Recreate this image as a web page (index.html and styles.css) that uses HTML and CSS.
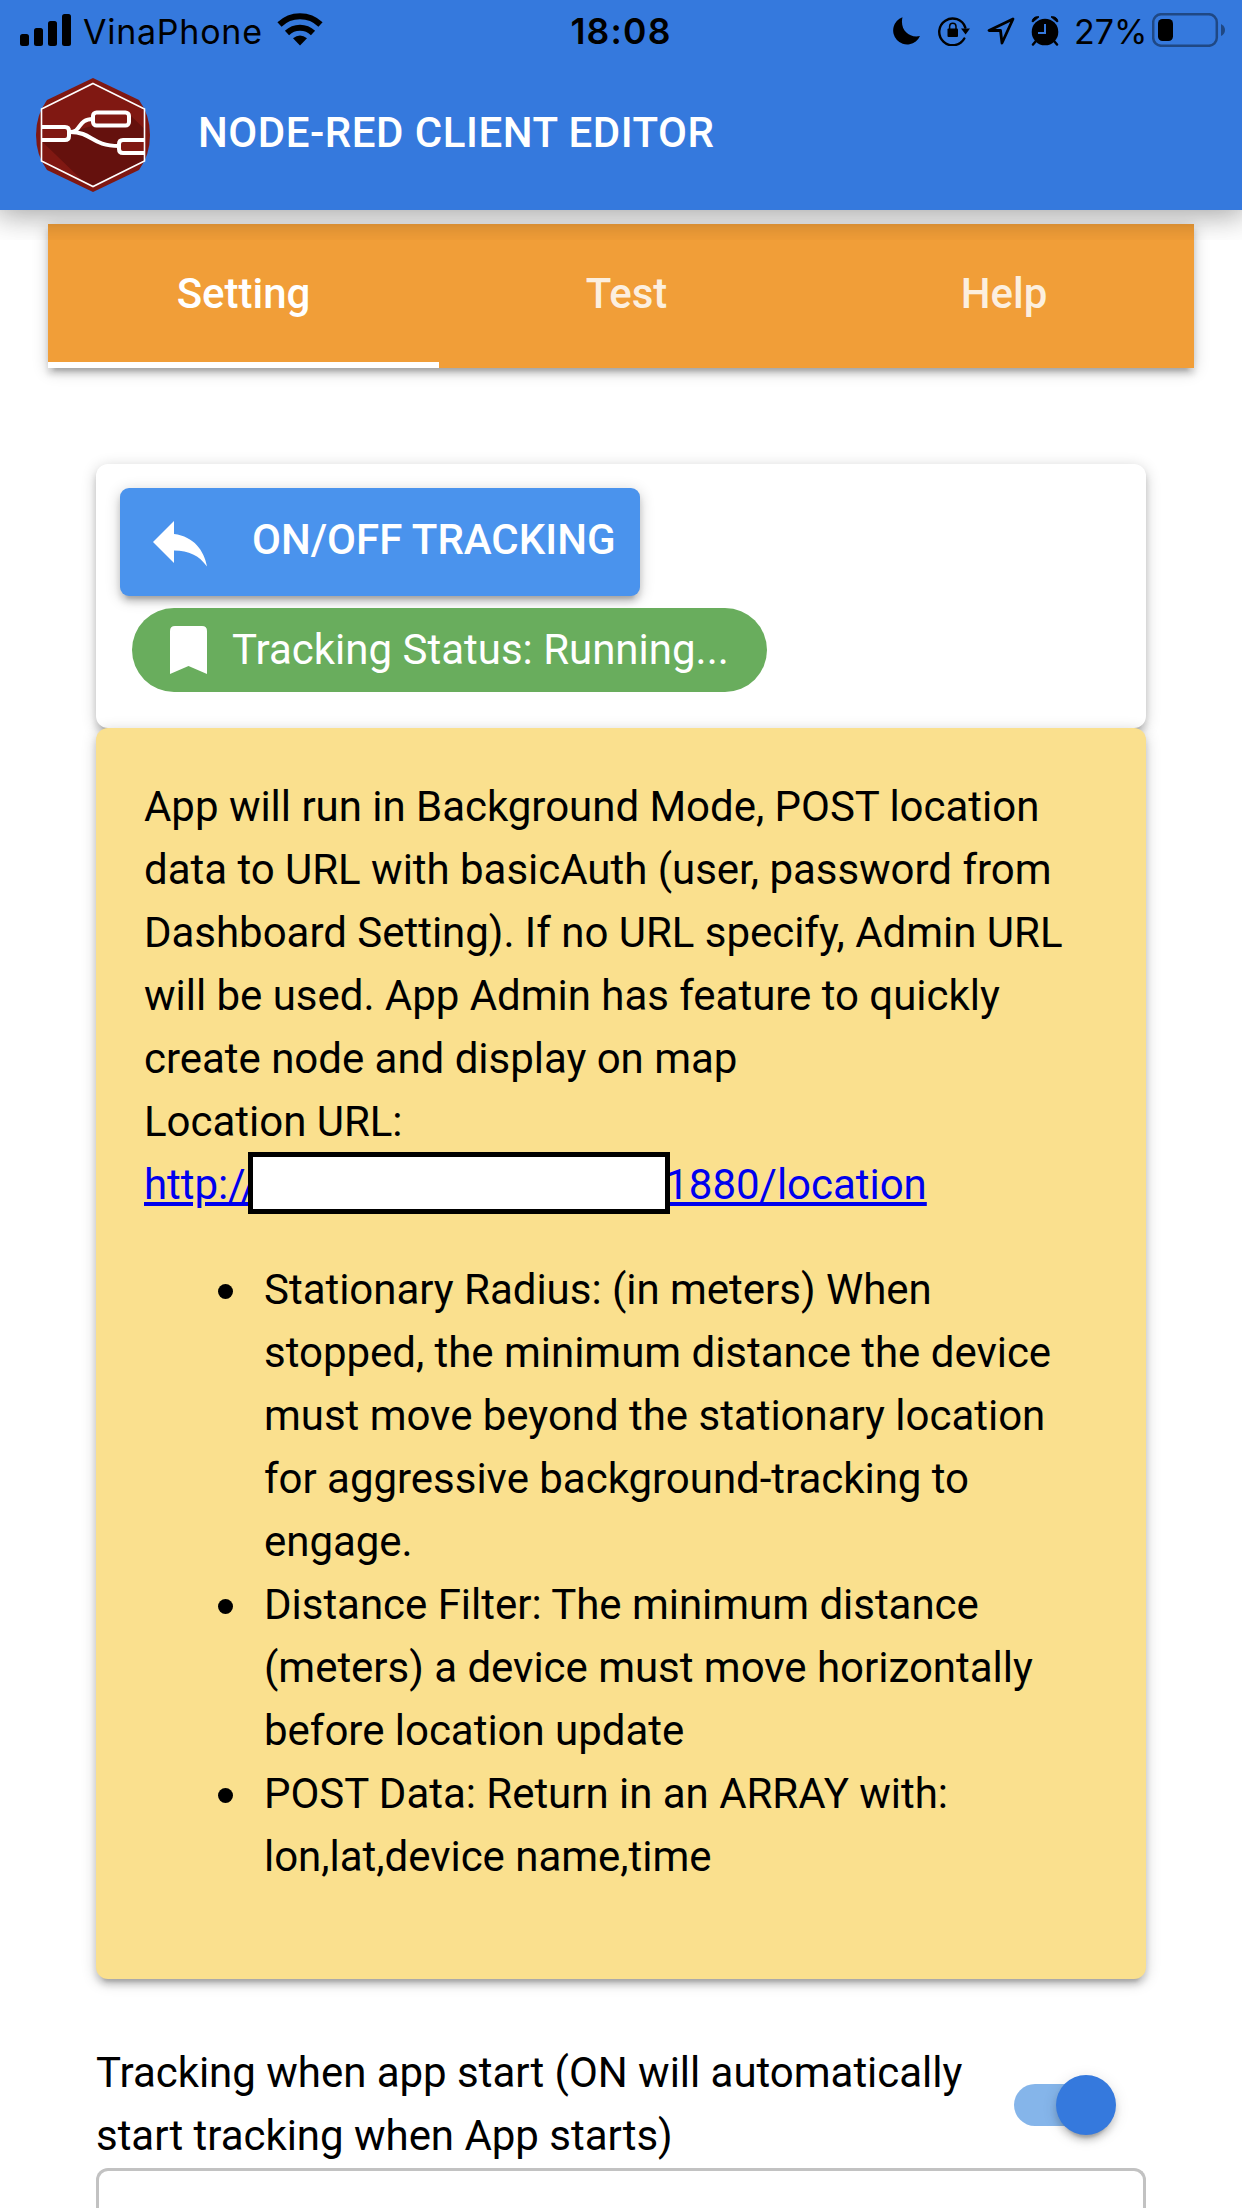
FILE: index.html
```html
<!DOCTYPE html>
<html lang="en">
<head>
<meta charset="utf-8">
<title>Node-RED Client Editor</title>
<link rel="stylesheet" href="styles.css">
</head>
<body>
<div class="header-layer">
  <header class="header">
    <div class="status">
      <div class="status-left">
        <svg class="signal" width="51" height="32" viewBox="0 0 51 32"><rect x="0" y="20" width="9" height="12" rx="2.5"/><rect x="14" y="14" width="9" height="18" rx="2.5"/><rect x="28" y="7" width="9" height="25" rx="2.5"/><rect x="42" y="0" width="9" height="32" rx="2.5"/></svg>
        <span class="carrier">VinaPhone</span>
        <svg class="wifi" width="46" height="34" viewBox="0 0 46 34"><g fill="none" stroke="#000" stroke-width="6"><path d="M2.500 12.500A29.500 29.500 0 0 1 43.500 12.500"/><path d="M10 21A18.700 18.700 0 0 1 36 21"/></g><path d="M23 33.500L16 26.300Q23 20.500 30 26.300Z"/></svg>
      </div>
      <span class="clock">18:08</span>
      <div class="status-right">
        <svg class="moon" width="28" height="28" viewBox="0 0 28 28"><path d="M10.500 0.200A14 14 0 1 0 28 19C17 21.500 7.500 12.500 10.500 0.200Z"/></svg>
        <svg class="lock" width="33" height="30" viewBox="0 0 33 30"><path d="M26.300 22.500A13.400 13.400 0 1 1 27.300 11.500" fill="none" stroke="#000" stroke-width="2.400" stroke-linecap="round"/><path d="M23 12.500H32L27.600 18.600Z"/><rect x="9.500" y="12.500" width="10.500" height="8.500" rx="1"/><path d="M11.600 13V10.500A3.200 3.200 0 0 1 18 10.500V13" fill="none" stroke="#000" stroke-width="1.500"/></svg>
        <svg class="arrow" width="28" height="28" viewBox="0 0 28 28"><path d="M26 2L2 13.500H13.500L15 26Z" fill="none" stroke="#000" stroke-width="2.800" stroke-linejoin="round"/></svg>
        <svg class="alarm" width="28" height="30" viewBox="0 0 28 30"><circle cx="14" cy="16" r="13.300"/><path d="M1 5.500Q2 0 8 .8L2.200 5.800ZM27 5.500Q26 0 20 .8L25.800 5.800Z" stroke="#000"/><path d="M5 25L2 28.500M23 25L26 28.500" stroke="#000" stroke-width="2.500" stroke-linecap="round"/><path d="M14 8V17H7" fill="none" stroke="#3579dd" stroke-width="2"/></svg>
        <span class="percent">27%</span>
        <svg class="battery" width="74" height="34" viewBox="0 0 74 34"><g opacity=".4"><rect x="1.200" y="1.200" width="63.600" height="31.600" rx="8" fill="none" stroke="#000" stroke-width="2.500"/><path d="M69 11Q73 13 73 17T69 23Z"/></g><rect x="6" y="6" width="15" height="22" rx="4.500"/></svg>
      </div>
    </div>
    <div class="toolbar">
      <svg class="logo" width="114" height="114" viewBox="0 0 114 114">
        <defs><clipPath id="inner"><path d="M57 5.500L108.500 31V83L57 108.500L5.500 83V31Z"/></clipPath></defs>
        <path d="M57 0L103 22Q114 37 114 57T103 92L57 114L11 92Q0 77 0 57T11 22Z" fill="#801812"/>
        <path d="M5.500 63L34 54L56 48L93 36L108.500 51V83L57 108.500L47 103Z" fill="#65110d" clip-path="url(#inner)"/>
        <g fill="#801812" stroke="#fff" stroke-width="4">
          <path d="M34 54C46 54 41 41 57 41M34 54C57 54 55 68 83 68" fill="none"/>
          <rect x="57" y="34.500" width="36" height="13" rx="3.500"/>
          <path d="M5.500 49H29Q33 49 33 53V58Q33 62 29 62H5.500M108.500 62H87Q83 62 83 66V71Q83 75 87 75H108.500"/>
        </g>
        <path d="M57 5.500L108.500 31V83L57 108.500L5.500 83V31Z" fill="none" stroke="#fff" stroke-width="1.600"/>
      </svg>
      <h1 class="title">NODE-RED CLIENT EDITOR</h1>
    </div>
  </header>
</div>
<main class="page">
  <nav class="tabs">
    <div class="tab tab-setting active">Setting</div>
    <div class="tab tab-test">Test</div>
    <div class="tab tab-help">Help</div>
  </nav>
  <div class="content">
    <section class="card control-card">
      <button class="track-button"><svg width="54" height="46" viewBox="0 0 54 46"><path d="M21 13V0L0 21L21 42V29.500C36 29.500 46 34.500 54 45.500C51 29.500 41 15.500 21 13Z" fill="#fff"/></svg><span>ON/OFF TRACKING</span></button>
      <div class="chip"><svg width="37" height="48" viewBox="0 0 37 48"><path d="M5 0H32Q37 0 37 5V48L18.500 40L0 48V5Q0 0 5 0Z" fill="#fff"/></svg><span>Tracking Status: Running...</span></div>
    </section>
    <section class="card info-card">
      <p>App will run in Background Mode, POST location<br>data to URL with basicAuth (user, password from<br>Dashboard Setting). If no URL specify, Admin URL<br>will be used. App Admin has feature to quickly<br>create node and display on map<br>Location URL:<br><a href="#">http://<span class="redacted"></span>1880/location</a></p>
      <ul>
        <li>Stationary Radius: (in meters) When<br>stopped, the minimum distance the device<br>must move beyond the stationary location<br>for aggressive background-tracking to<br>engage.</li>
        <li>Distance Filter: The minimum distance<br>(meters) a device must move horizontally<br>before location update</li>
        <li>POST Data: Return in an ARRAY with:<br>lon,lat,device name,time</li>
      </ul>
    </section>
    <div class="setting-row">
      <span>Tracking when app start (ON will automatically<br>start tracking when App starts)</span>
      <div class="toggle"><div class="thumb"></div></div>
    </div>
    <div class="field"></div>
  </div>
</main>
</body>
</html>
```
FILE: styles.css
```css
* { box-sizing: border-box; }
body {
  margin: 0;
  height: 2208px;
  overflow: hidden;
  background: #fff;
  color: #000;
  font: 400 42px/63px Roboto, "Liberation Sans", sans-serif;
  letter-spacing: -.025px;
}
svg { display: block; flex: none; }

/* The header shadow stops 30px below the bar */
.header-layer {
  position: relative;
  z-index: 2;
  height: 240px;
  margin-bottom: -30px;
  overflow: hidden;
}
.header {
  height: 210px;
  background: #3579dd;
  box-shadow: 0 0 30px 6px rgba(0,0,0,.2), 0 0 30px rgba(0,0,0,.24);
}
.status {
  display: grid;
  grid-template-columns: 1fr auto 1fr;
  height: 60px;
  padding: 0 16px 0 20px;
  font: 400 34px/60px Inter, sans-serif;
}
.status-left, .status-right { display: flex; align-items: flex-start; }
.status-right { justify-content: flex-end; }
.signal { margin-top: 14px; }
.carrier { margin-left: 12px; width: 179px; padding-top: 2px; letter-spacing: .75px; white-space: nowrap; }
.wifi { margin: 12px 0 0 15px; }
.clock { padding-top: 2px; font-weight: 600; font-size: 35.500px; letter-spacing: 1.200px; margin-left: -4px; }
.moon { margin-top: 17px; }
.lock { margin: 16px 0 0 18px; }
.arrow { margin: 17px 0 0 16px; }
.alarm { margin: 16px 0 0 16px; }
.percent { width: 70px; padding-top: 2px; margin-left: 15px; white-space: nowrap; }
.battery { margin: 13px 0 0 8px; }
.toolbar { display: flex; align-items: center; height: 150px; padding-left: 36px; }
.title { margin: 0 0 6px 48px; color: #fff; font-size: 42px; font-weight: 500; letter-spacing: .52px; }

.page { padding: 14px 48px 0; }
.tabs {
  display: flex;
  height: 144px;
  background: #f19e38;
  color: #fff;
  font-weight: 500;
  box-shadow: 0 3px 15px rgba(0,0,0,.2), 0 6px 6px rgba(0,0,0,.14), 0 9px 3px -6px rgba(0,0,0,.12);
}
.tab { padding-top: 38px; text-align: center; color: rgba(255,255,255,.85); }
.tab-setting { width: 391px; }
.tab-test { width: 375px; }
.tab-help { width: 380px; }
.active { color: #fff; border-bottom: 6px solid #fff; }

.content { padding: 96px 48px 0; }
.card {
  border-radius: 12px;
  box-shadow: 0 3px 15px rgba(0,0,0,.2), 0 6px 6px rgba(0,0,0,.14), 0 9px 3px -6px rgba(0,0,0,.12);
}
.control-card { height: 264px; padding: 24px; background: #fff; }
.track-button {
  display: flex;
  align-items: center;
  width: 520px;
  height: 108px;
  padding: 0 0 0 33px;
  gap: 45px;
  border: 0;
  border-radius: 9px;
  background: #4a93ed;
  color: #fff;
  font: 500 42px/63px Roboto, sans-serif;
  white-space: nowrap;
  box-shadow: 0 3px 15px rgba(0,0,0,.2), 0 6px 6px rgba(0,0,0,.14), 0 9px 3px -6px rgba(0,0,0,.12);
}
.track-button svg { margin-top: 3px; }
.track-button span { margin-bottom: 5px; }
.chip {
  display: flex;
  align-items: center;
  width: 635px;
  height: 84px;
  margin: 12px 0 0 12px;
  padding-left: 38px;
  gap: 25px;
  border-radius: 42px;
  background: #69ad5d;
  color: #fff;
  letter-spacing: 0;
  white-space: nowrap;
}
.chip span { margin-bottom: 1px; }
.info-card { height: 1251px; padding: 47px 48px; background: #fae08e; }
.info-card p { margin: 0; }
.info-card ul { margin: 42px 0; padding-left: 120px; list-style: none; }
.info-card li { position: relative; }
.info-card li::before {
  content: "";
  position: absolute;
  left: -46px;
  top: 26px;
  width: 15px;
  height: 15px;
  border-radius: 50%;
  background: #000;
}
.info-card a { color: #0000ee; }
.redacted {
  display: inline-block;
  position: relative;
  width: 422px;
  height: 62px;
  margin: -1px -5px 0 -10px;
  vertical-align: top;
  border: 5px solid #000;
  background: #fff;
}
.setting-row { display: flex; justify-content: space-between; height: 127px; margin-top: 62px; }
.toggle {
  display: flex;
  width: 102px;
  height: 42px;
  margin: 43px 30px 0 0;
  border-radius: 21px;
  background: linear-gradient(to right, #85b5ea 72px, transparent 72px);
}
.thumb {
  width: 60px;
  height: 60px;
  margin: -9px 0 0 42px;
  border-radius: 50%;
  background: #3579dd;
  box-shadow: 0 9px 3px -6px rgba(0,0,0,.2), 0 6px 6px rgba(0,0,0,.14), 0 3px 15px rgba(0,0,0,.12);
}
/* Only the top of the next field is on screen */
.field { height: 40px; border: 3px solid #c2c2c2; border-bottom: 0; border-radius: 12px 12px 0 0; }
```
